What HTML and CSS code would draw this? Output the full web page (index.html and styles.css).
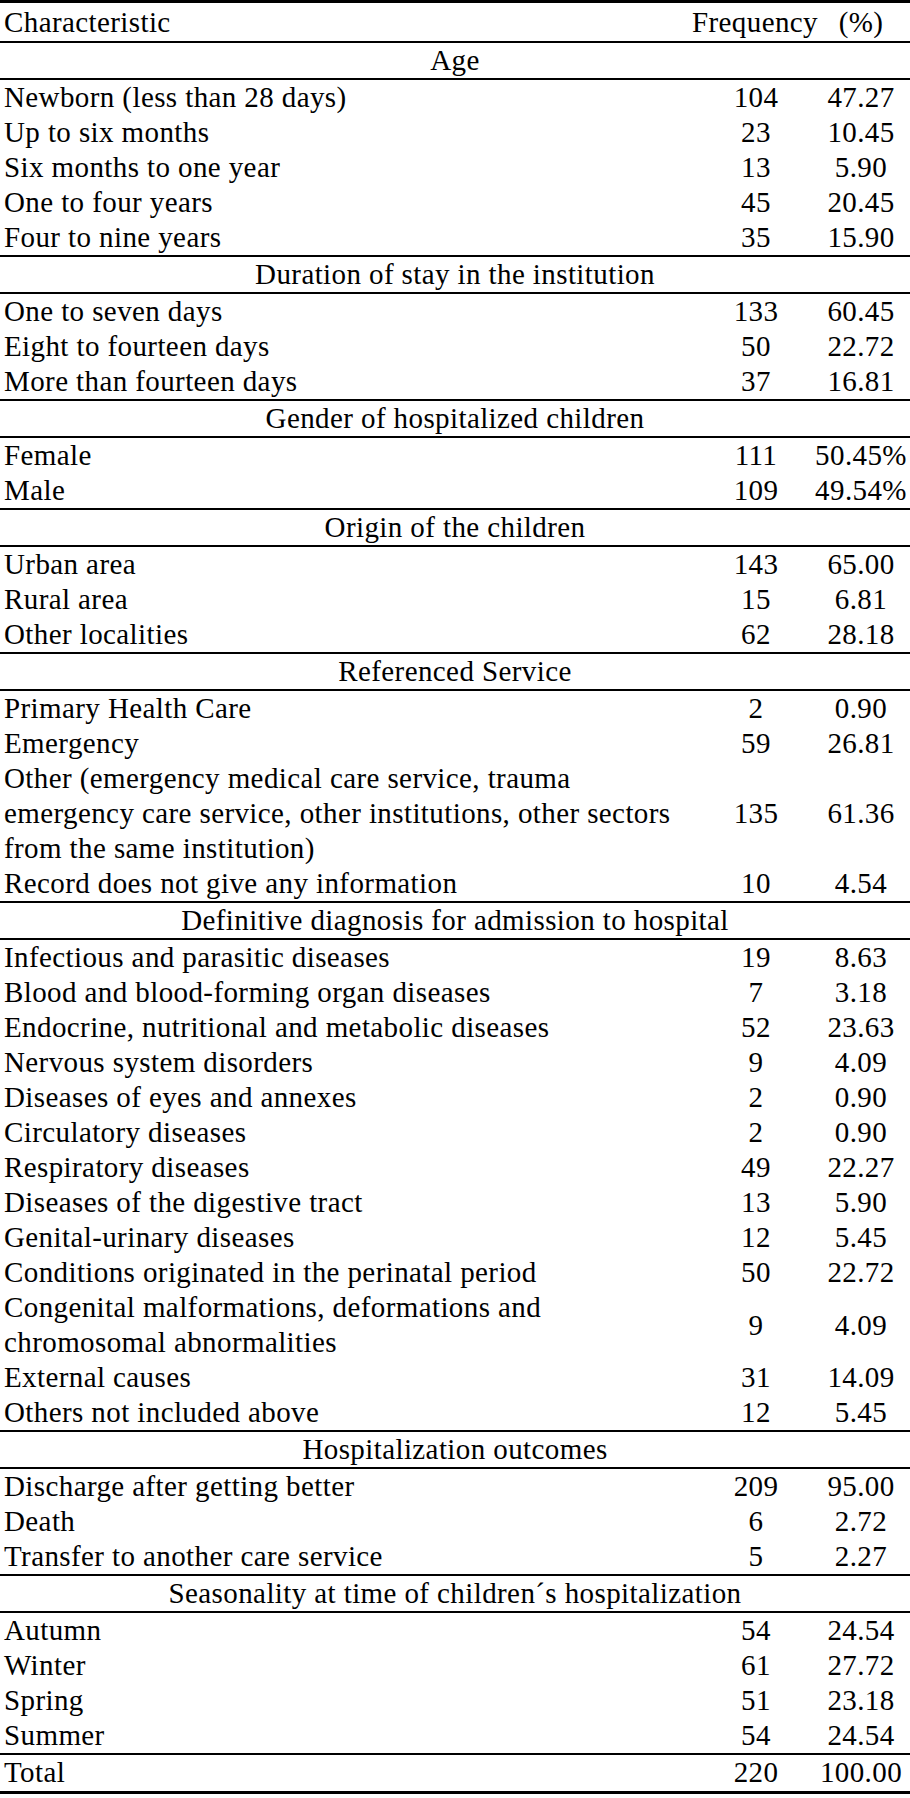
FILE: index.html
```html
<!DOCTYPE html>
<html lang="en">
<head>
<meta charset="utf-8">
<title>Characteristics of hospitalized children</title>
<link rel="stylesheet" href="styles.css">
</head>
<body>
<table class="data">
  <colgroup>
    <col class="c-label">
    <col class="c-freq">
    <col class="c-pct">
  </colgroup>
  <thead>
    <tr class="head">
      <th class="label">Characteristic</th>
      <th class="num freq">Frequency</th>
      <th class="num">(%)</th>
    </tr>
  </thead>
  <tbody>
    <tr class="title"><td colspan="3">Age</td></tr>
    <tr><td class="label">Newborn (less than 28 days)</td><td class="num">104</td><td class="num">47.27</td></tr>
    <tr><td class="label">Up to six months</td><td class="num">23</td><td class="num">10.45</td></tr>
    <tr><td class="label">Six months to one year</td><td class="num">13</td><td class="num">5.90</td></tr>
    <tr><td class="label">One to four years</td><td class="num">45</td><td class="num">20.45</td></tr>
    <tr class="last"><td class="label">Four to nine years</td><td class="num">35</td><td class="num">15.90</td></tr>

    <tr class="title"><td colspan="3">Duration of stay in the institution</td></tr>
    <tr><td class="label">One to seven days</td><td class="num">133</td><td class="num">60.45</td></tr>
    <tr><td class="label">Eight to fourteen days</td><td class="num">50</td><td class="num">22.72</td></tr>
    <tr class="last"><td class="label">More than fourteen days</td><td class="num">37</td><td class="num">16.81</td></tr>

    <tr class="title"><td colspan="3">Gender of hospitalized children</td></tr>
    <tr><td class="label">Female</td><td class="num">111</td><td class="num">50.45%</td></tr>
    <tr class="last"><td class="label">Male</td><td class="num">109</td><td class="num">49.54%</td></tr>

    <tr class="title"><td colspan="3">Origin of the children</td></tr>
    <tr><td class="label">Urban area</td><td class="num">143</td><td class="num">65.00</td></tr>
    <tr><td class="label">Rural area</td><td class="num">15</td><td class="num">6.81</td></tr>
    <tr class="last"><td class="label">Other localities</td><td class="num">62</td><td class="num">28.18</td></tr>

    <tr class="title"><td colspan="3">Referenced Service</td></tr>
    <tr><td class="label">Primary Health Care</td><td class="num">2</td><td class="num">0.90</td></tr>
    <tr><td class="label">Emergency</td><td class="num">59</td><td class="num">26.81</td></tr>
    <tr><td class="label">Other (emergency medical care service, trauma<br>emergency care service, other institutions, other sectors<br>from the same institution)</td><td class="num">135</td><td class="num">61.36</td></tr>
    <tr class="last"><td class="label">Record does not give any information</td><td class="num">10</td><td class="num">4.54</td></tr>

    <tr class="title"><td colspan="3">Definitive diagnosis for admission to hospital</td></tr>
    <tr><td class="label">Infectious and parasitic diseases</td><td class="num">19</td><td class="num">8.63</td></tr>
    <tr><td class="label">Blood and blood-forming organ diseases</td><td class="num">7</td><td class="num">3.18</td></tr>
    <tr><td class="label">Endocrine, nutritional and metabolic diseases</td><td class="num">52</td><td class="num">23.63</td></tr>
    <tr><td class="label">Nervous system disorders</td><td class="num">9</td><td class="num">4.09</td></tr>
    <tr><td class="label">Diseases of eyes and annexes</td><td class="num">2</td><td class="num">0.90</td></tr>
    <tr><td class="label">Circulatory diseases</td><td class="num">2</td><td class="num">0.90</td></tr>
    <tr><td class="label">Respiratory diseases</td><td class="num">49</td><td class="num">22.27</td></tr>
    <tr><td class="label">Diseases of the digestive tract</td><td class="num">13</td><td class="num">5.90</td></tr>
    <tr><td class="label">Genital-urinary diseases</td><td class="num">12</td><td class="num">5.45</td></tr>
    <tr><td class="label">Conditions originated in the perinatal period</td><td class="num">50</td><td class="num">22.72</td></tr>
    <tr><td class="label">Congenital malformations, deformations and<br>chromosomal abnormalities</td><td class="num">9</td><td class="num">4.09</td></tr>
    <tr><td class="label">External causes</td><td class="num">31</td><td class="num">14.09</td></tr>
    <tr class="last"><td class="label">Others not included above</td><td class="num">12</td><td class="num">5.45</td></tr>

    <tr class="title"><td colspan="3">Hospitalization outcomes</td></tr>
    <tr><td class="label">Discharge after getting better</td><td class="num">209</td><td class="num">95.00</td></tr>
    <tr><td class="label">Death</td><td class="num">6</td><td class="num">2.72</td></tr>
    <tr class="last"><td class="label">Transfer to another care service</td><td class="num">5</td><td class="num">2.27</td></tr>

    <tr class="title"><td colspan="3">Seasonality at time of children´s hospitalization</td></tr>
    <tr><td class="label">Autumn</td><td class="num">54</td><td class="num">24.54</td></tr>
    <tr><td class="label">Winter</td><td class="num">61</td><td class="num">27.72</td></tr>
    <tr><td class="label">Spring</td><td class="num">51</td><td class="num">23.18</td></tr>
    <tr class="last"><td class="label">Summer</td><td class="num">54</td><td class="num">24.54</td></tr>
  </tbody>
  <tfoot>
    <tr class="total"><td class="label">Total</td><td class="num">220</td><td class="num">100.00</td></tr>
  </tfoot>
</table>
</body>
</html>
```

FILE: styles.css
```css
html, body {
  margin: 0;
  padding: 0;
  background: #ffffff;
}

body {
  font-family: "Liberation Serif", "Times New Roman", serif;
  font-size: 29px;
  letter-spacing: 0.4px;
  color: #000000;
}

.data {
  width: 910px;
  border-collapse: collapse;
  table-layout: fixed;
  border-top: 3px solid #000;
  border-bottom: 3px solid #000;
}

.c-label { width: 700px; }
.c-freq  { width: 112px; }
.c-pct   { width: 98px; }

.data th,
.data td {
  padding: 0;
  font-weight: normal;
  line-height: 35px;
  vertical-align: middle;
  white-space: nowrap;
}

.data .label {
  text-align: left;
  padding-left: 4px;
}

.data .num {
  text-align: center;
}

.head th {
  height: 38px;
  border-bottom: 2px solid #000;
}

.head th.freq {
  text-indent: -8px;
}

.title td {
  height: 34.5px;
  text-align: center;
  border-bottom: 2px solid #000;
}

tr.last td {
  border-bottom: 2px solid #000;
}

.total td {
  height: 35.5px;
}
```
